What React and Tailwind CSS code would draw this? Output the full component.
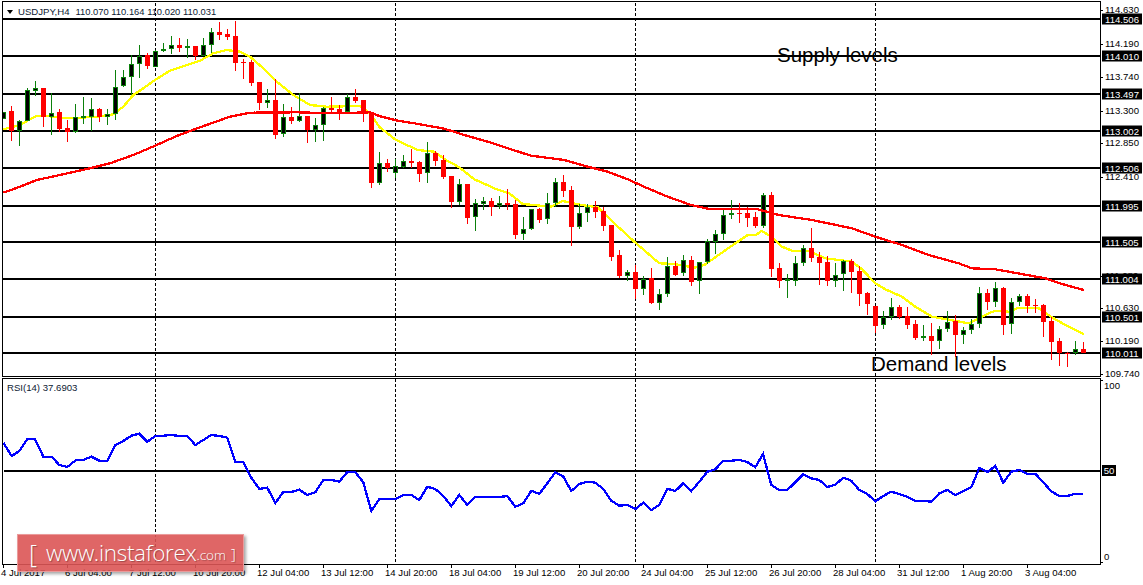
const D = `u 112 112 119 119
d 106 111 131 141
u 120 121 131 146
u 88 90 121 121
u 81 88 91 96
d 88 88 117 127
u 93 113 117 135
d 109 112 129 132
d 120 128 132 142
u 104 117 132 133
u 97 116 118 124
u 98 109 117 131
d 108 109 117 122
u 109 114 117 125
u 70 87 114 120
u 70 77 86 87
u 55 64 77 95
u 45 56 64 78
d 53 55 66 69
u 50 51 67 67
u 43 49 51 52
u 36 45 49 54
d 38 45 48 52
u 39 46 48 58
d 46 46 56 60
u 38 45 56 56
u 28 32 45 53
d 22 32 35 40
d 29 34 37 40
d 21 36 63 71
d 59 62 63 79
d 60 62 83 86
d 82 82 103 110
u 89 100 103 108
d 79 100 135 139
u 104 117 134 137
d 107 117 121 124
u 93 116 121 122
d 116 116 130 143
u 118 125 130 142
u 107 108 125 141
d 97 108 110 113
d 105 109 113 120
u 94 97 112 113
d 89 97 101 103
d 100 100 113 122
d 112 112 183 188
u 152 163 183 185
d 159 163 168 172
u 159 166 173 178
u 155 161 167 168
d 149 161 163 168
d 161 162 174 182
u 142 153 173 183
d 151 153 161 166
d 155 160 177 179
d 176 176 202 208
u 179 184 202 205
d 184 184 218 224
u 199 203 217 231
u 197 201 204 210
d 198 201 207 216
u 196 203 206 209
d 189 203 205 210
d 200 204 235 239
u 217 229 234 240
u 209 209 229 230
d 208 209 220 223
u 193 203 219 224
u 178 182 203 207
d 175 182 191 197
d 186 190 227 246
u 204 213 227 229
u 204 207 213 222
d 201 207 212 218
d 207 211 226 231
d 225 225 257 261
d 250 255 276 278
u 270 272 276 281
d 265 272 289 299
u 276 279 289 295
d 268 278 303 304
u 289 294 303 310
u 257 266 294 297
d 261 266 275 276
u 255 260 273 276
d 256 260 282 286
u 262 262 281 294
u 239 241 262 264
u 230 234 242 254
u 209 215 234 240
u 200 213 215 219
d 203 213 214 223
d 207 213 218 227
d 212 217 226 228
u 193 195 226 228
d 192 195 269 277
d 263 268 281 288
u 274 279 281 298
u 256 263 281 286
u 245 248 263 266
d 228 248 258 262
d 252 257 263 285
d 256 262 281 286
u 263 275 281 287
u 260 261 274 291
d 259 261 272 293
d 266 271 294 306
d 292 293 304 315
d 306 306 326 333
u 311 317 325 329
u 298 307 317 320
d 305 307 317 319
d 307 316 325 329
d 320 324 338 340
u 325 336 337 341
d 323 336 341 355
u 326 329 341 349
u 311 322 329 332
d 315 321 335 357
u 327 330 335 344
u 319 324 330 334
u 287 293 324 328
d 289 293 302 310
u 282 288 302 307
d 287 288 325 335
u 298 302 324 334
u 294 296 302 306
d 294 296 306 313
d 299 305 306 313
d 304 305 322 337
d 317 321 342 360
d 338 341 353 366
d 352 353 354 367
u 341 349 353 355
d 342 349 353 353`.split("\n").map((l, i) => {
  const [k, h, t, b, lo] = l.split(" ");
  return { k, h: +h, t: +t, b: +b, lo: +lo, i };
});

const z1 = (a) => a.map(([x, y]) => `${(x / 3).toFixed(1)},${(y / 3).toFixed(1)}`);
const z = (ox, oy, a) => a.map(([x, y]) => `${(ox + x / 3).toFixed(1)},${(oy + y / 3).toFixed(1)}`);

const YELLOW = [
  ...z1([[10,388],[60,375],[90,358],[110,348],[140,348],[180,352],[200,355],[240,353],[290,350],[340,343],[370,320],[400,285],[430,265],[465,240],[510,212],[560,195],[600,182],[640,160],[680,150],[720,155],[750,170],[790,205],[830,245],[880,285],[930,315],[980,320],[1080,318],[1110,340],[1140,383]]),
  ...z(381, 90, [[0,115],[45,150],[110,180],[160,185],[195,210],[235,232],[280,268],[345,297],[385,310],[425,342],[510,350],[545,333],[600,345],[650,352],[700,400],[760,455],[800,490],[835,520],[880,522],[940,533],[970,525],[1020,490],[1060,462],[1100,435],[1125,435],[1141,423]]),
  ...z(762, 180, [[30,170],[60,200],[90,212],[140,213],[190,235],[270,245],[300,268],[340,310],[370,328],[420,350],[460,380],[510,410],[620,430],[680,400],[700,392],[740,395],[770,383],[830,385],[870,412],[910,435],[965,463]]),
].join(" ");

const REDLINE = [
  ...z1([[10,578],[60,560],[110,540],[180,525],[270,505],[330,490],[400,465],[470,435],[530,408],[600,382],[690,350],[750,338],[890,337],[1000,340],[1110,337],[1140,349]]),
  ...z(381, 90, [[50,92],[100,100],[190,116],[250,135],[320,155],[390,178],[450,197],[550,210],[620,230],[680,245],[740,268],[800,295],[860,320],[930,345],[980,356],[1130,358]]),
  ...z(762, 180, [[50,105],[150,120],[270,145],[340,170],[420,195],[500,225],[590,250],[630,265],[700,268],[850,295],[900,312],[965,330]]),
].join(" ");

const RSI = [
  ...z(0, 375, [[10,203],[35,243],[58,228],[82,192],[105,192],[130,245],[155,245],[178,270],[202,276],[228,255],[250,255],[274,245],[298,257],[322,257],[346,210],[370,198],[394,182],[418,176],[442,200],[466,183],[490,182],[514,180],[538,183],[562,183],[586,210],[610,195],[634,180],[658,183],[682,188],[706,260],[730,260],[754,308],[778,342],[802,338],[826,384],[850,351],[874,351],[898,344],[922,360],[946,352],[970,315],[994,315],[1018,320],[1042,291],[1066,292],[1090,322],[1114,408],[1138,372]]),
  ...z(381, 420, [[19,237],[43,237],[67,225],[91,225],[115,240],[139,200],[163,207],[187,228],[211,258],[235,225],[259,255],[283,231],[307,231],[331,231],[355,231],[379,228],[403,260],[427,250],[451,212],[475,222],[499,190],[523,157],[547,170],[571,213],[595,192],[619,185],[643,188],[667,207],[691,242],[715,257],[739,255],[763,267],[787,248],[811,270],[835,255],[859,206],[883,213],[907,190],[931,213],[955,185],[979,155],[1003,148],[1027,122],[1051,122],[1075,120],[1099,126],[1123,142]]),
  ...z(762, 420, [[3,102],[28,195],[52,210],[76,210],[100,187],[124,163],[148,175],[172,180],[196,201],[220,194],[244,173],[268,182],[292,210],[316,222],[340,244],[364,228],[388,215],[412,222],[436,230],[460,242],[484,242],[508,245],[532,220],[556,210],[580,225],[604,213],[628,202],[652,144],[676,156],[700,138],[724,188],[748,155],[772,150],[796,161],[820,161],[844,187],[868,214],[892,228],[916,228],[940,221],[964,221]]),
].join(" ");

const LEVELS = [
  [19, "114.506"], [56, "114.010"], [94, "113.497"], [131, "113.002"], [168, "112.506"],
  [206, "111.995"], [242, "111.505"], [279, "111.004"], [317, "110.501"], [353, "110.011"],
];
const PRICES = [
  [9, "114.630"], [43, "114.190"], [76, "113.740"], [110, "113.300"], [142, "112.850"], [176, "112.410"],
  [275, "111.080"], [307, "110.630"], [340, "110.190"], [373, "109.740"],
];
const DATES = ["4 Jul 2017", "6 Jul 04:00", "7 Jul 12:00", "10 Jul 20:00", "12 Jul 04:00", "13 Jul 12:00", "14 Jul 20:00", "18 Jul 04:00", "19 Jul 12:00", "20 Jul 20:00", "24 Jul 04:00", "25 Jul 12:00", "26 Jul 20:00", "28 Jul 04:00", "31 Jul 12:00", "1 Aug 20:00", "3 Aug 04:00"];
const VLINES = [155, 395, 635, 875];

const labelFont = "font-['Liberation_Sans',sans-serif] text-[9.6px] leading-none";

function Grid({ top, bottom }) {
  return VLINES.map((x) => (
    <line key={x} x1={x + 0.5} x2={x + 0.5} y1={top} y2={bottom} stroke="#000" strokeDasharray="3 2" />
  ));
}

function PricePlot() {
  return (
    <svg className="block w-[1098px] h-[373px]" viewBox="3 3 1098 373" shapeRendering="crispEdges">
      <Grid top={3} bottom={376} />
      {LEVELS.map(([y]) => (
        <rect key={y} x={3} width={1098} y={y - 1} height={2} fill="#000" />
      ))}
      <polyline points={YELLOW} fill="none" stroke="#ffff00" strokeWidth="2.3" />
      {D.map((c) => {
        const up = c.k === "u";
        const col = up ? "#0b800b" : "#ff0000";
        const left = 1 + 8 * c.i;
        const wick = 3 + 8 * c.i;
        const h = Math.max(c.b - c.t, 1);
        return (
          <g key={c.i}>
            <rect x={wick} width={1} y={c.h} height={c.lo - c.h} fill={col} />
            {up ? (
              <rect x={left + 0.5} y={c.t + 0.5} width={4} height={Math.max(h - 1, 1)} fill="#000" stroke={col} strokeWidth="1" />
            ) : (
              <rect x={left} y={c.t} width={5} height={h} fill={col} />
            )}
          </g>
        );
      })}
      <polyline points={REDLINE} fill="none" stroke="#ff0000" strokeWidth="2.3" />
    </svg>
  );
}

function RsiPlot() {
  return (
    <svg className="block w-[1098px] h-[185px]" viewBox="3 379 1098 185" shapeRendering="crispEdges">
      <Grid top={379} bottom={564} />
      <rect x={4} width={1097} y={470} height={2} fill="#000" />
      <polyline points={RSI} fill="none" stroke="#0000ff" strokeWidth="2.3" />
    </svg>
  );
}

function PriceAxis() {
  return (
    <div className="relative w-[42px] h-[375px] shrink-0">
      {PRICES.map(([y, t]) => (
        <div key={t} className="absolute left-0 flex items-center h-[10px] -translate-y-1/2" style={{ top: y }}>
          <span className="w-[2px] h-px bg-black" />
          <span className={`ml-[2px] text-black ${labelFont}`}>{t}</span>
        </div>
      ))}
      {LEVELS.map(([y, t]) => (
        <div key={t} className="absolute left-[1px] w-[40px] h-[11px] bg-black flex items-center justify-center -translate-y-1/2" style={{ top: y - 1 }}>
          <span className={`text-white ${labelFont}`}>{t}</span>
        </div>
      ))}
    </div>
  );
}

function RsiAxis() {
  return (
    <div className="relative w-[42px] h-[186px] shrink-0">
      <span className={`absolute left-[3px] top-[3px] text-black ${labelFont}`}>100</span>
      <span className="absolute left-0 top-[2px] w-[2px] h-px bg-black" />
      <div className="absolute left-[1px] top-[87px] w-[14px] h-[11px] bg-black flex items-center justify-center">
        <span className={`text-white ${labelFont}`}>50</span>
      </div>
      <span className={`absolute left-[3px] top-[174px] text-black ${labelFont}`}>0</span>
      <span className="absolute left-0 top-[184px] w-[2px] h-px bg-black" />
    </div>
  );
}

export default function App() {
  return (
    <div className="relative w-[1143px] h-[585px] bg-white overflow-hidden pt-px pl-[2px]">
      <div className="flex">
        <div className="relative border border-black w-[1099px] h-[376px] border-b-black">
          <div className="pt-px pl-0"><PricePlot /></div>
          <div className={`absolute left-[4px] top-[5px] flex items-center gap-[3px] text-[#0d1a33] ${labelFont}`}>
            <span className="w-0 h-0 border-l-[3.5px] border-r-[3.5px] border-t-[4px] border-l-transparent border-r-transparent border-t-black mr-[2px]" />
            <span>USDJPY,H4</span>
            <span className="ml-[3px] text-[9.4px]">110.070 110.164 110.020 110.031</span>
          </div>
          <span className="absolute left-[774px] top-[43px] font-['Liberation_Sans',sans-serif] text-[20.5px] leading-none text-black">Supply levels</span>
          <span className="absolute left-[868px] top-[352px] font-['Liberation_Sans',sans-serif] text-[20.5px] leading-none text-black">Demand levels</span>
        </div>
        <PriceAxis />
      </div>
      <div className="flex mt-px">
        <div className="relative border border-black border-b-black w-[1099px] h-[187px]">
          <RsiPlot />
          <span className={`absolute left-[4px] top-[4px] text-[9.3px] text-[#0d1a33] ${labelFont}`}>RSI(14) 37.6903</span>
        </div>
        <RsiAxis />
      </div>
      <div className="flex -mt-px">
        {DATES.map((d) => (
          <div key={d} className="w-[64px] shrink-0">
            <span className="block ml-px w-px h-[4px] bg-black" />
            <span className={`block -ml-px whitespace-nowrap text-black ${labelFont}`}>{d}</span>
          </div>
        ))}
      </div>
      <div className="absolute left-[17px] top-[534px] w-[227px] h-[38px] bg-[#dc5555]/90 border border-[#ea9a9a] shadow-[2px_2px_3px_rgba(0,0,0,0.35)] flex items-center text-white font-['Open_Sans',sans-serif] font-light [text-shadow:1px_1px_1px_rgba(0,0,0,0.3)]">
        <span className="ml-[11px] text-[25px] leading-none">[</span>
        <span className="ml-[9px] text-[22.5px] leading-none tracking-[-0.3px]">www.instaforex</span>
        <span className="text-[13.5px] leading-none mt-[5px]">.com</span>
        <span className="ml-[5px] text-[15px] leading-none mt-[3px]">]</span>
      </div>
    </div>
  );
}
